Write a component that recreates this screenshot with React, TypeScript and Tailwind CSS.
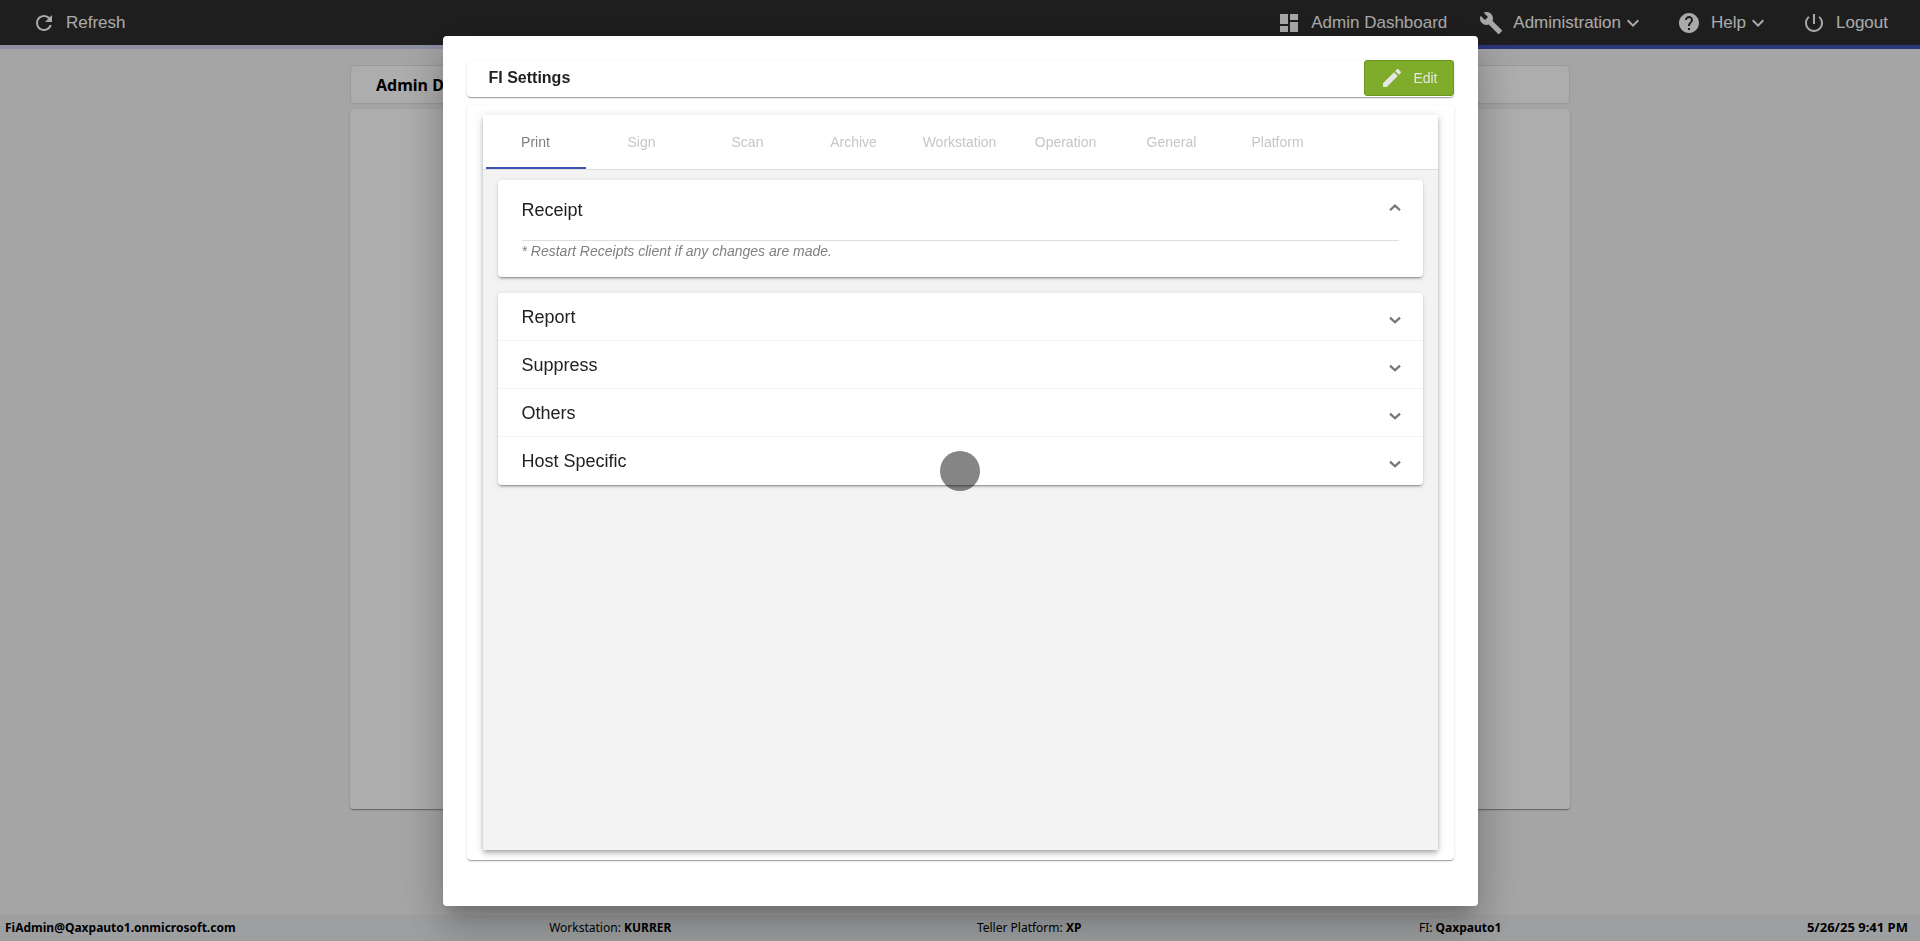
import React from 'react';

const tabs = ['Print', 'Sign', 'Scan', 'Archive', 'Workstation', 'Operation', 'General', 'Platform'];
const collapsedSections = ['Report', 'Suppress', 'Others', 'Host Specific'];

const iconPaths = {
  refresh:
    'M17.65 6.35C16.2 4.9 14.21 4 12 4c-4.42 0-7.99 3.58-7.99 8s3.57 8 7.99 8c3.73 0 6.84-2.55 7.73-6h-2.08c-.82 2.33-3.04 4-5.65 4-3.31 0-6-2.69-6-6s2.69-6 6-6c1.66 0 3.14.69 4.22 1.78L13 11h7V4l-2.35 2.35z',
  dashboard: 'M3 13h8V3H3v10zm0 8h8v-6H3v6zm10 0h8V11h-8v10zm0-18v6h8V3h-8z',
  build:
    'M22.7 19l-9.1-9.1c.9-2.3.4-5-1.5-6.9-2-2-5-2.4-7.4-1.3L9 6 6 9 1.6 4.7C.4 7.1.9 10.1 2.9 12.1c1.9 1.9 4.6 2.4 6.9 1.5l9.1 9.1c.4.4 1 .4 1.4 0l2.3-2.3c.5-.4.5-1.1.1-1.4z',
  help: 'M12 2C6.48 2 2 6.48 2 12s4.48 10 10 10 10-4.48 10-10S17.52 2 12 2zm1 17h-2v-2h2v2zm2.07-7.75l-.9.92C13.45 12.9 13 13.5 13 15h-2v-.5c0-1.1.45-2.1 1.17-2.83l1.24-1.26c.37-.36.59-.86.59-1.41 0-1.1-.9-2-2-2s-2 .9-2 2H8c0-2.21 1.79-4 4-4s4 1.79 4 4c0 .88-.36 1.68-.93 2.25z',
  power:
    'M13 3h-2v10h2V3zm4.83 2.17l-1.42 1.42C17.99 7.86 19 9.81 19 12c0 3.87-3.13 7-7 7s-7-3.13-7-7c0-2.19 1.01-4.14 2.58-5.42L6.17 5.17C4.23 6.82 3 9.26 3 12c0 4.97 4.03 9 9 9s9-4.03 9-9c0-2.74-1.23-5.18-3.17-6.83z',
  edit: 'M3 17.25V21h3.75L17.81 9.94l-3.75-3.75L3 17.25zM20.71 7.04c.39-.39.39-1.02 0-1.41l-2.34-2.34c-.39-.39-1.02-.39-1.41 0l-1.83 1.83 3.75 3.75 1.83-1.83z',
  expand: 'M16.59 8.59L12 13.17 7.41 8.59 6 10l6 6 6-6z',
};

type IconName = keyof typeof iconPaths;

const cardShadow =
  'shadow-[0_2px_1px_-1px_rgba(0,0,0,0.2),0_1px_1px_0_rgba(0,0,0,0.14),0_1px_3px_0_rgba(0,0,0,0.12)]';
const panelShadow =
  'shadow-[0_3px_1px_-2px_rgba(0,0,0,0.2),0_2px_2px_0_rgba(0,0,0,0.14),0_1px_5px_0_rgba(0,0,0,0.12)]';

function Icon({ name }: { name: IconName }) {
  return (
    <svg viewBox="0 0 24 24" className="size-6 shrink-0" fill="currentColor" aria-hidden="true">
      <path d={iconPaths[name]} />
    </svg>
  );
}

function Chevron({ up = false }: { up?: boolean }) {
  return (
    <svg
      viewBox="0 0 12 8"
      className="-mr-0.5 h-2 w-3 shrink-0"
      fill="none"
      stroke="#757575"
      strokeWidth="2.2"
      aria-hidden="true"
    >
      <path d={up ? 'M1 6.2 6 1.6 11 6.2' : 'M1 1.6 6 6.2 11 1.6'} />
    </svg>
  );
}

function NavItem({ icon, label, menu = false }: { icon: IconName; label: string; menu?: boolean }) {
  return (
    <button type="button" className="flex items-center">
      <span className="mr-2.5">
        <Icon name={icon} />
      </span>
      <span>{label}</span>
      {menu && <Icon name="expand" />}
    </button>
  );
}

function Header() {
  return (
    <header>
      <nav className="flex h-[45px] items-center gap-8 bg-[#2d2d2d] px-8 text-[17px] text-[#fafafa]">
        <NavItem icon="refresh" label="Refresh" />
        <div className="ml-auto flex items-center gap-8">
          <NavItem icon="dashboard" label="Admin Dashboard" />
          <NavItem icon="build" label="Administration" menu />
          <NavItem icon="help" label="Help" menu />
          <NavItem icon="power" label="Logout" />
        </div>
      </nav>
      <div className="flex h-1">
        <div className="flex-1 bg-[#d0d2ef]" />
        <div className="flex-1 bg-[#3f51b5]" />
      </div>
    </header>
  );
}

function StatusBar() {
  return (
    <footer className="flex h-[26px] items-center justify-between bg-[#e9ebed] pr-3 pl-[5px] font-['Noto_Sans',sans-serif] text-xs text-black">
      <b className="mr-2">FiAdmin@Qaxpauto1.onmicrosoft.com</b>
      <span>
        Workstation: <b>KURRER</b>
      </span>
      <span>
        Teller Platform: <b>XP</b>
      </span>
      <span className="ml-8">
        FI: <b>Qaxpauto1</b>
      </span>
      <b className="text-[13px]">5/26/25 9:41 PM</b>
    </footer>
  );
}

function SettingsDialog() {
  return (
    <div className="fixed inset-0 flex justify-center bg-black/32 pt-9 pb-[35px]">
      <section
        role="dialog"
        aria-labelledby="dialog-title"
        className="flex w-full max-w-[1035px] flex-col rounded bg-white px-6 pt-6 pb-[46px] text-[#212121] shadow-[0_11px_15px_-7px_rgba(0,0,0,0.2),0_24px_38px_3px_rgba(0,0,0,0.14),0_9px_46px_8px_rgba(0,0,0,0.12)]"
      >
        <div className={`flex h-[37px] items-start justify-between rounded ${cardShadow}`}>
          <h1 id="dialog-title" className="pl-[22px] text-base leading-9 font-bold">
            FI Settings
          </h1>
          <button
            type="button"
            className="flex h-9 items-center gap-[9px] rounded-[3px] border border-[#6b991f] bg-[#7fad2b] px-[15px] text-sm text-[#e6e6e6]"
          >
            <Icon name="edit" />
            Edit
          </button>
        </div>

        <div className={`mt-2 flex min-h-0 flex-1 flex-col rounded px-4 py-2.5 ${cardShadow}`}>
          <div className="flex min-h-0 flex-1 flex-col bg-[#f3f3f3] shadow-[0_2px_4px_-1px_rgba(0,0,0,0.2),0_4px_5px_0_rgba(0,0,0,0.14),0_1px_10px_0_rgba(0,0,0,0.12)]">
            <div role="tablist" className="flex gap-1.5 border-b border-[#dedede] bg-white px-[3px]">
              {tabs.map((tab, i) => (
                <button
                  key={tab}
                  type="button"
                  role="tab"
                  aria-selected={i === 0}
                  className={
                    i === 0
                      ? 'h-[54px] w-[100px] border-b-2 border-[#3f51b5] pt-0.5 text-sm text-[#808080]'
                      : 'h-[54px] w-[100px] border-b-2 border-transparent pt-0.5 text-sm text-[#c6c6c6]'
                  }
                >
                  {tab}
                </button>
              ))}
            </div>

            <div className="flex flex-col gap-4 px-[15px] pt-2.5">
              <div className={`rounded bg-white px-6 pb-4 ${panelShadow}`}>
                <button
                  type="button"
                  aria-expanded="true"
                  className="flex h-[61px] w-full items-center justify-between border-b border-[#dedede] text-lg"
                >
                  Receipt
                  <span className="pb-1">
                    <Chevron up />
                  </span>
                </button>
                <p className="text-sm leading-5 text-[#808080] italic">
                  * Restart Receipts client if any changes are made.
                </p>
              </div>

              <div className={`divide-y divide-[#f5f5f5] rounded bg-white ${panelShadow}`}>
                {collapsedSections.map((name) => (
                  <button
                    key={name}
                    type="button"
                    aria-expanded="false"
                    className="flex h-12 w-full items-center justify-between px-6 text-lg"
                  >
                    {name}
                    <span className="pt-1.5">
                      <Chevron />
                    </span>
                  </button>
                ))}
              </div>
            </div>
          </div>
        </div>
      </section>

      <div
        aria-hidden="true"
        className="absolute top-1/2 left-1/2 size-10 -translate-x-1/2 -translate-y-1/2 rounded-full bg-black/48"
      />
    </div>
  );
}

export default function App() {
  return (
    <div className="flex min-h-screen flex-col bg-[#f3f3f3] font-['Liberation_Sans',Arial,sans-serif]">
      <Header />
      <main className="mx-auto mt-4 mb-[106px] flex w-full max-w-[1220px] flex-1 flex-col gap-[5px]">
        <h2 className="h-[39px] rounded border border-[#e2e2e2] bg-white px-[25px] font-['Noto_Sans',sans-serif] text-base leading-[38px] font-bold text-black">
          Admin Dashboard
        </h2>
        <div className={`flex-1 rounded bg-white ${cardShadow}`} />
      </main>
      <StatusBar />
      <SettingsDialog />
    </div>
  );
}
